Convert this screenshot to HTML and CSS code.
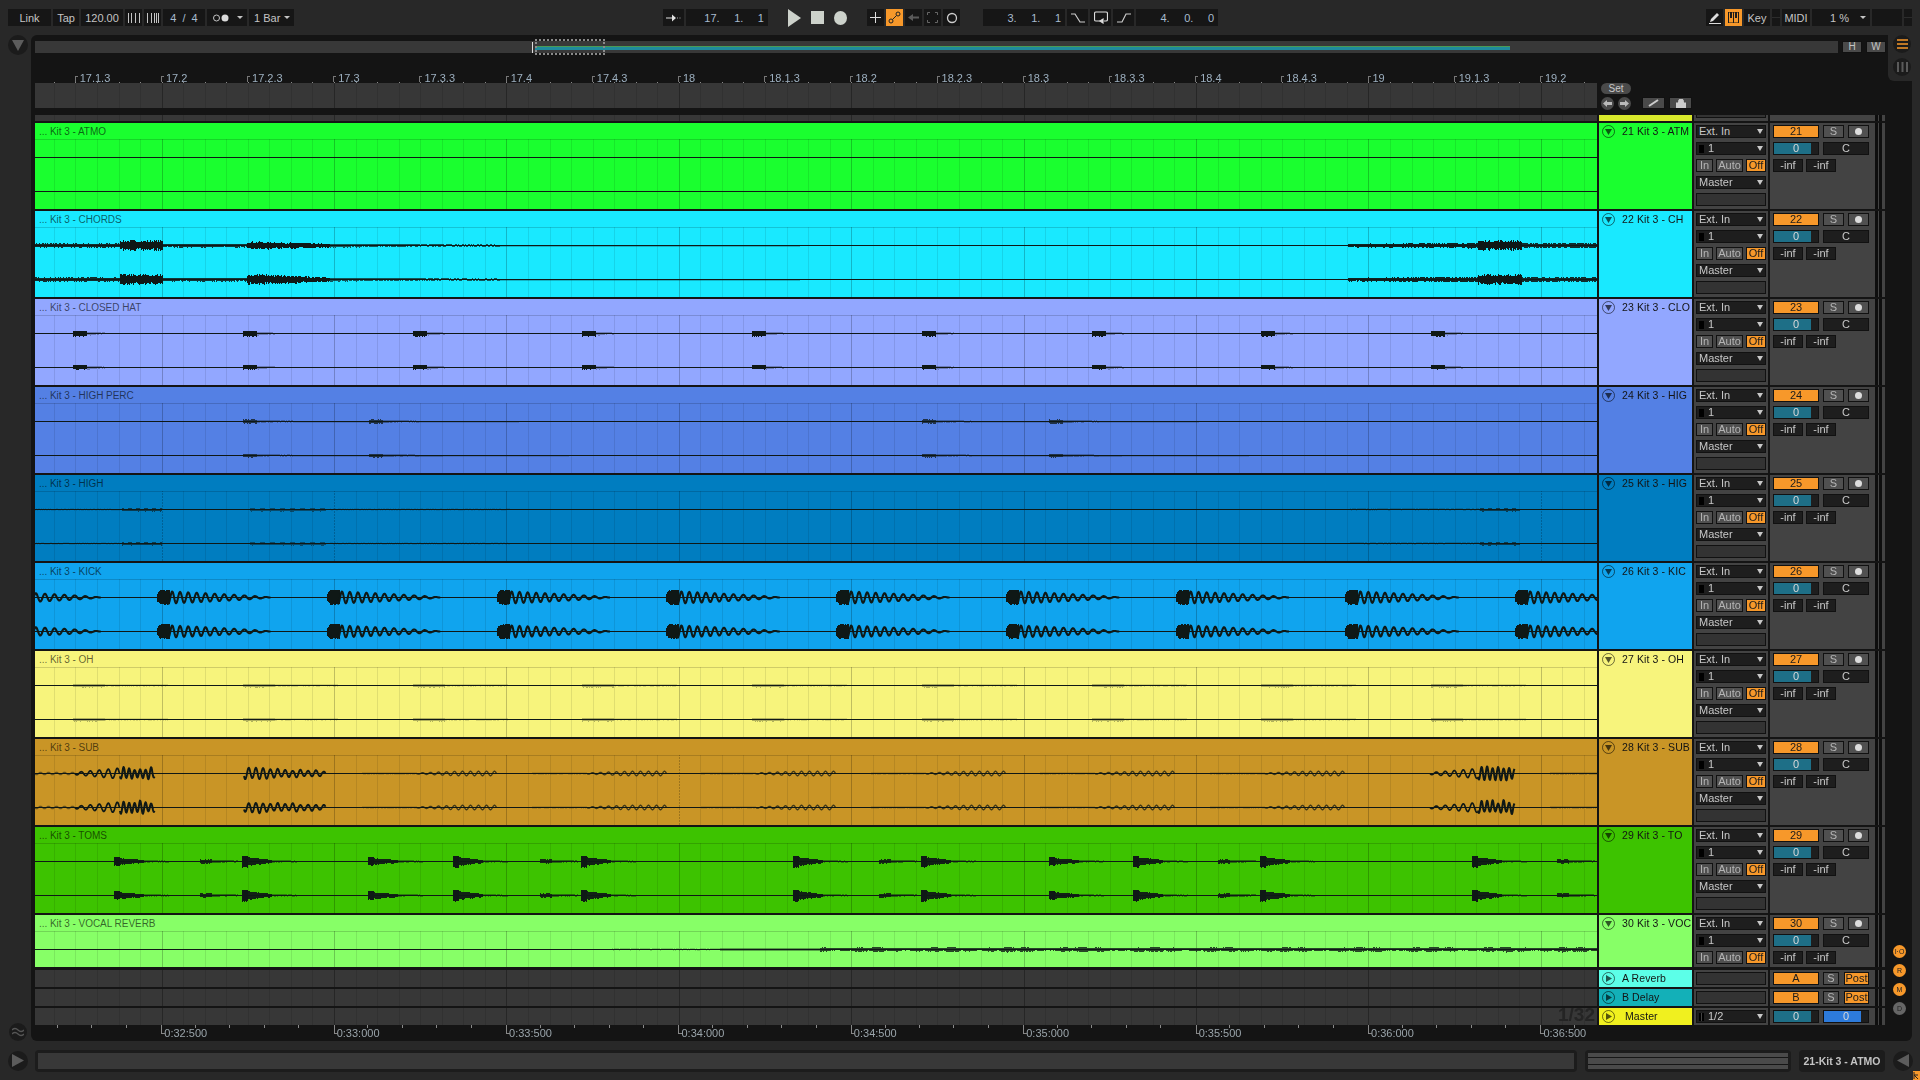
FILE: index.html
```html
<!DOCTYPE html>
<html lang="en">
<head>
    <meta charset="UTF-8">
    <title>Arrangement View</title>
    <link rel="stylesheet" href="styles.css">
</head>
<body>
    <div class="toolbar">
        <div class="tb w-43">Link</div>
        <div class="tb w-26">Tap</div>
        <div class="tb w-42">120.00</div>
        <div class="tb w-17"><svg width="13" height="12"><path d="M1.5 1v10M4.5 1v10M8.5 1v10M12.5 1v10" stroke="#c4c4c4"/></svg></div>
        <div class="tb w-17"><svg width="13" height="12"><path d="M1.5 1v10M5.5 1v10M8.5 1v10M10.5 1v10M12.5 1v10" stroke="#c4c4c4"/></svg></div>
        <div class="tb w-42 num-blue spaced">4 / 4</div>
        <div class="tb w-40 left-pad">
            <svg width="18" height="10"><circle cx="4.5" cy="5" r="3" fill="none" stroke="#c4c4c4"/><circle cx="13" cy="5" r="3.5" fill="#dcdcdc"/></svg>
            <span class="mini-arrow"></span>
        </div>
        <div class="tb w-45 left-pad">1 Bar<span class="mini-arrow"></span></div>

        <div class="tb w-21 gap-center">
            <svg width="16" height="10"><path d="M0 4.500h6V1.500l4 3.500-4 3.500V5.500H0z" fill="#e0e0e0"/><path d="M11 5h1M13.500 5h1" stroke="#aaa"/></svg>
        </div>
        <div class="tb w-82 counter">17. 1. 1</div>

        <svg class="transport first" width="13" height="18"><path d="M0 0l13 9-13 9z" fill="#cdd2cb"/></svg>
        <svg class="transport" width="13" height="13"><rect width="13" height="13" fill="#cdd2cb"/></svg>
        <svg class="transport" width="13" height="14"><ellipse cx="6.5" cy="7" rx="6.5" ry="7" fill="#cdd2cb"/></svg>

        <div class="tb w-17 gap-tools"><svg width="11" height="11"><path d="M5.5 0v11M0 5.5h11" stroke="#ddd"/></svg></div>
        <div class="tb w-17 orange"><svg width="13" height="13" fill="none" stroke="#222"><circle cx="3" cy="10" r="2"/><circle cx="10" cy="3" r="2"/><path d="M4.5 8.5l4-4"/></svg></div>
        <div class="tb w-17"><svg width="11" height="9"><path d="M0 4.500L5 1v2.500h6v2H5V8z" fill="#5a5a5a"/></svg></div>
        <div class="tb w-17"><svg width="11" height="11" fill="none" stroke="#666"><path d="M.5 3V.5H3M8 .5h2.500V3M10.500 8v2.500H8M3 10.500H.5V8"/></svg></div>
        <div class="tb w-17"><svg width="12" height="12"><circle cx="6" cy="6" r="4.500" fill="none" stroke="#ccc" stroke-width="1.300"/></svg></div>

        <div class="tb w-82 counter gap-loop">3. 1. 1</div>
        <div class="tb w-21"><svg width="14" height="10" fill="none" stroke="#ccc" stroke-width="1.200"><path d="M0 1h4l5 8h5"/></svg></div>
        <div class="tb w-21"><svg width="14" height="13" fill="none" stroke="#ddd" stroke-width="1.200"><path d="M6 10H2q-1.500 0-1.500-1.500v-6Q.5 1 2 1h10q1.500 0 1.500 1.500v6Q13.500 10 12 10h-2"/><path d="M9 8v4L6 10z" fill="#ddd"/></svg></div>
        <div class="tb w-21"><svg width="14" height="10" fill="none" stroke="#ccc" stroke-width="1.200"><path d="M0 9h5l4-8h5"/></svg></div>
        <div class="tb w-82 counter">4. 0. 0</div>

        <div class="tb w-17 gap-right"><svg width="12" height="12"><path d="M2 7l6-6 2 2-6 6-3 1z" fill="#ddd"/><path d="M0 11.500h12" stroke="#ddd"/></svg></div>
        <div class="tb w-17 orange"><svg width="11" height="11"><path d="M.5 0v11h10V0zM3 0v6M5.500 0v11M8 0v6" fill="none" stroke="#1c1c1c"/><path d="M2 0h2v6H2zM7 0h2v6H7z" fill="#1c1c1c"/></svg></div>
        <div class="tb w-26">Key</div>
        <div class="tb w-8 split"></div>
        <div class="tb w-28">MIDI</div>
        <div class="tb w-58 cpu">1 %<span class="mini-arrow"></span></div>
        <div class="tb w-30"></div>
        <div class="tb w-8 split"></div>
    </div>

    <div class="main">
        <div class="gutter">
            <div class="round"><svg width="12" height="11"><path d="M0 0h12L6 11z" fill="#5c5c5c"/></svg></div>
            <div class="round small"><svg width="12" height="10" fill="none" stroke="#555" stroke-width="1.300"><path d="M0 3q3-3 6 0t6 0M0 7q3-3 6 0t6 0"/></svg></div>
        </div>

        <div class="panel">
            <div class="notch">
                <div class="round small"><svg width="11" height="10"><path d="M0 1h11M0 5h11M0 9h11" stroke="#f7982a" stroke-width="1.500"/></svg></div>
                <div class="round small"><svg width="11" height="10"><path d="M1 0v10M5.500 0v10M10 0v10" stroke="#5a5a5a" stroke-width="2"/></svg></div>
            </div>

            <div class="overview">
                <div class="overview-bar">
                    <div class="ov-wave"></div>
                    <div class="ov-marker"></div>
                    <div class="ov-select"></div>
                </div>
                <div class="ov-btn">H</div>
                <div class="ov-btn">W</div>
            </div>

            <div class="top">
                <div class="top-left">
                    <div class="ruler" id="bar-ruler">
                        <canvas class="ruler-dots" id="bar-dots"></canvas>
                    </div>
                    <canvas class="grid band-a"></canvas>
                    <canvas class="grid band-b"></canvas>
                </div>
                <div class="top-right">
                    <div class="set-btn">Set</div>
                    <div class="set-tools">
                        <div class="loc"><svg width="9" height="9"><path d="M0 4.500L4 1v2h5v3H4v2z" fill="#bbb"/></svg></div>
                        <div class="loc"><svg width="9" height="9"><path d="M9 4.500L5 1v2H0v3h5v2z" fill="#bbb"/></svg></div>
                        <div class="tool-btn first"><svg width="11" height="8"><path d="M1 7l9-6" stroke="#ccc" stroke-width="2"/></svg></div>
                        <div class="tool-btn"><svg width="10" height="9"><path d="M0 4h10v5H0zM2.500 4V2.500a2.500 2.500 0 0 1 5 0V4" fill="#ccc" stroke="#ccc"/></svg></div>
                    </div>
                    <div class="prev-row">
                        <div class="prev-title"></div>
                        <div class="prev-io"><div class="prev-box"></div></div>
                        <div class="prev-mixer"><div class="meter"><span></span><span></span></div></div>
                    </div>
                </div>
            </div>

            <div class="body">
                <div class="rows" id="rows"></div>
                <div class="side">
                    <div class="dot-btn">I·O</div>
                    <div class="dot-btn">R</div>
                    <div class="dot-btn">M</div>
                    <div class="dot-btn off">D</div>
                </div>
            </div>

            <div class="time-ruler" id="time-ruler">
                <canvas class="time-ticks" id="time-ticks"></canvas>
            </div>
        </div>
    </div>

    <div class="statusbar">
        <div class="round status-play"><svg width="12" height="13"><path d="M0 0l12 6.500L0 13z" fill="#5c5c5c"/></svg></div>
        <div class="status-box long"><div class="status-inner"></div></div>
        <div class="status-box meter-box"><div class="status-lines"></div></div>
        <div class="status-name">21-Kit 3 - ATMO</div>
        <div class="round status-back"><svg width="12" height="13"><path d="M12 0L0 6.500 12 13z" fill="#5c5c5c"/></svg></div>
        <svg class="corner" width="7" height="9"><rect width="7" height="9" fill="#f7982a"/><path d="M1 1v7M1 4h4M1 4l4 4" stroke="#222"/></svg>
    </div>

    <script src="script.js"></script>
</body>
</html>
```

FILE: styles.css
```css
* {
    box-sizing: border-box;
    margin: 0;
    padding: 0;
}

body {
    width: 1920px;
    height: 1080px;
    overflow: hidden;
    background-color: #282828;
    color: #c4c4c4;
    font-family: "Liberation Sans", Arial, sans-serif;
    font-size: 11px;
}

canvas {
    display: block;
}

/* toolbar */

.toolbar {
    display: flex;
    align-items: center;
    gap: 2px;
    height: 35px;
    padding: 0 0 0 8px;
}

.tb {
    display: flex;
    align-items: center;
    justify-content: center;
    height: 17px;
    background-color: #161616;
    white-space: pre;
}

.w-8 { width: 8px; }
.w-17 { width: 17px; }
.w-21 { width: 21px; }
.w-26 { width: 26px; }
.w-28 { width: 28px; }
.w-30 { width: 30px; }
.w-40 { width: 40px; }
.w-42 { width: 42px; }
.w-43 { width: 43px; }
.w-45 { width: 45px; }
.w-58 { width: 58px; }
.w-82 { width: 82px; }

.orange {
    background-color: #f7982a;
}

.num-blue,
.counter {
    color: #a8bccf;
}

.spaced {
    word-spacing: 3px;
}

.left-pad {
    justify-content: flex-start;
    padding-left: 5px;
}

.mini-arrow {
    width: 0;
    height: 0;
    margin-left: auto;
    margin-right: 4px;
    border-left: 3px solid transparent;
    border-right: 3px solid transparent;
    border-top: 3px solid #c4c4c4;
}

.counter {
    justify-content: flex-end;
    padding-right: 4px;
    word-spacing: 11.5px;
}

.cpu {
    padding-left: 18px;
}

.split {
    background: linear-gradient(#161616 8px, #2c2c2c 8px, #2c2c2c 9px, #161616 9px);
}

.gap-center { margin-left: 367px; }
.gap-tools { margin-left: 18px; }
.gap-loop { margin-left: 21px; }
.gap-right { margin-left: 486px; }

.transport {
    margin-left: 8px;
}

.transport.first {
    margin-left: 18px;
}

/* main area */

.main {
    display: flex;
    height: 1006px;
}

.gutter {
    display: flex;
    flex-direction: column;
    justify-content: space-between;
    flex: 0 0 31px;
    padding-left: 8px;
}

.round {
    display: flex;
    align-items: center;
    justify-content: center;
    flex: none;
    width: 20px;
    height: 20px;
    border-radius: 50%;
    background-color: #1b1b1b;
}

.round.small {
    width: 18px;
    height: 18px;
}

.gutter .round.small {
    margin-left: 1px;
}

.panel {
    position: relative;
    width: 1881px;
    background-color: #141414;
    border-radius: 6px 0 6px 6px;
    padding-left: 4px;
}

.notch {
    position: absolute;
    top: 0;
    right: 0;
    display: flex;
    flex-direction: column;
    gap: 5px;
    width: 24px;
    height: 46px;
    padding-left: 5px;
    background-color: #282828;
    border-bottom-left-radius: 6px;
}

.overview {
    display: flex;
    gap: 4px;
    height: 18px;
    padding-top: 6px;
}

.overview-bar {
    position: relative;
    width: 1803px;
    height: 12px;
    background-color: #383838;
}

.ov-wave {
    position: absolute;
    top: 5px;
    left: 500px;
    width: 975px;
    height: 4px;
    background-color: #1f8a9c;
    border-top: 1px solid #4b9a55;
}

.ov-marker {
    position: absolute;
    top: 1px;
    left: 497px;
    width: 1px;
    height: 11px;
    background-color: #ddd;
}

.ov-select {
    position: absolute;
    top: -2px;
    left: 500px;
    width: 70px;
    height: 16px;
    border: 2px dotted #8a8a8a;
}

.ov-btn {
    width: 20px;
    height: 12px;
    background-color: #4a4a4a;
    border: 1px solid #111;
    color: #c4c4c4;
    font-size: 10px;
    line-height: 10px;
    text-align: center;
}

.top {
    display: flex;
    gap: 2px;
    height: 70px;
}

.top-left {
    width: 1562px;
}

.ruler {
    position: relative;
    display: flex;
    height: 30px;
    padding-left: 39.7px;
    color: #9db0c0;
}

.bar-mark {
    position: relative;
    flex: 0 0 86.2px;
    padding: 19px 0 0 5px;
    line-height: 12px;
}

.bar-mark::before {
    content: "";
    position: absolute;
    left: 0;
    bottom: 1px;
    width: 2px;
    height: 5px;
    border-left: 1px solid #777;
    border-top: 1px solid #777;
}

.ruler-dots {
    position: absolute;
    left: 0;
    bottom: 0;
    width: 1562px;
    height: 1px;
}

.band-a {
    width: 1562px;
    height: 25px;
}

.band-b {
    width: 1562px;
    height: 6px;
    margin-top: 7px;
}

.top-right {
    width: 286px;
    padding-top: 30px;
}

.set-btn {
    width: 30px;
    height: 11px;
    margin-left: 2px;
    border-radius: 6px;
    background-color: #4a4a4a;
    color: #c8c8c8;
    font-size: 10px;
    line-height: 11px;
    text-align: center;
}

.set-tools {
    display: flex;
    gap: 4px;
    height: 13px;
    margin: 3px 0 5px 2px;
}

.loc {
    display: flex;
    align-items: center;
    justify-content: center;
    width: 13px;
    height: 13px;
    border-radius: 50%;
    background-color: #4a4a4a;
}

.tool-btn {
    display: flex;
    align-items: center;
    justify-content: center;
    width: 23px;
    height: 12px;
    background-color: #4a4a4a;
    border: 1px solid #111;
}

.tool-btn.first {
    margin-left: 7px;
}

.prev-row {
    display: flex;
    gap: 2px;
    height: 6px;
}

.prev-title {
    width: 93px;
    background-color: #d9e92c;
}

.prev-io {
    width: 74px;
    padding: 0 2px;
    background-color: #434343;
}

.prev-box {
    height: 3px;
    background-color: #333;
    border: 1px solid #111;
    border-top: 0;
}

.prev-mixer {
    display: flex;
    width: 115px;
    padding-left: 105px;
    background-color: #434343;
}

/* track rows */

.body {
    display: flex;
    height: 902px;
}

.rows {
    display: flex;
    flex-direction: column;
    gap: 2px;
    width: 1850px;
}

.track {
    display: flex;
    gap: 2px;
    flex: 0 0 86px;
}

.track.short {
    flex-basis: 52px;
    margin-bottom: 1px;
}

.track.ret {
    flex-basis: 17px;
}

.clip {
    width: 1562px;
    background-color: var(--c);
}

.clip-name {
    height: 16px;
    padding-left: 4px;
    color: rgba(0, 0, 0, 0.62);
    font-size: 10px;
    letter-spacing: -0.04px;
    line-height: 18px;
    white-space: pre;
}

.wave {
    width: 1562px;
    height: 70px;
}

.short .wave {
    height: 36px;
}

.grid {
    display: block;
    background-color: #373737;
}

.ret .grid {
    width: 1562px;
    height: 17px;
}

.clip-wrap {
    position: relative;
}

.title {
    display: flex;
    align-items: flex-start;
    gap: 7px;
    width: 93px;
    padding: 2px 0 0 3px;
    overflow: hidden;
    background-color: var(--c);
    color: #141414;
    font-size: 10.5px;
    letter-spacing: 0.1px;
    line-height: 13px;
    white-space: pre;
}

.arm {
    display: flex;
    align-items: center;
    justify-content: center;
    flex: none;
    width: 13px;
    height: 13px;
    border: 1px solid rgba(0, 0, 0, 0.55);
    border-radius: 50%;
}

.io {
    display: flex;
    flex-direction: column;
    gap: 4px;
    width: 74px;
    padding: 2px 2px 0;
    background-color: #434343;
}

.mixer {
    display: flex;
    width: 115px;
    padding-left: 3px;
    background-color: #434343;
}

.strip {
    display: flex;
    flex-direction: column;
    gap: 4px;
    width: 96px;
    padding-top: 2px;
}

.strip-row {
    display: flex;
    gap: 4px;
}

.meter {
    display: flex;
    gap: 1px;
    flex: none;
    width: 7px;
    margin-left: 6px;
}

.prev-mixer .meter {
    margin-left: 0;
}

.meter span {
    flex: 1;
    background-color: #0e0e0e;
}

.ctl {
    position: relative;
    display: flex;
    align-items: center;
    flex: none;
    height: 13px;
    padding-left: 2px;
    background-color: #1e1e1e;
    border: 1px solid #111;
    color: #c8c8c8;
    line-height: 11px;
}

.ctl.center {
    justify-content: center;
    padding-left: 0;
}

.drop::after {
    content: "";
    position: absolute;
    right: 2px;
    top: 3px;
    border-left: 3.5px solid transparent;
    border-right: 3.5px solid transparent;
    border-top: 5px solid #c8c8c8;
}

.chan-bar {
    width: 5px;
    height: 8px;
    margin-right: 4px;
    background-color: #000;
}

.chan-bar.stereo {
    background: repeating-linear-gradient(to right, #000 0, #000 2px, #444 2px, #444 3px);
}

.box {
    background-color: #333;
}

.grey {
    background-color: #505050;
    color: #b4b4b4;
}

.hot {
    background-color: #f7982a;
    color: #1c1c1c;
}

.w-in { width: 17px; margin-right: 3px; }
.w-auto { width: 27px; margin-right: 3px; }
.w-off { width: 20px; }
.w-46 { width: 46px; }
.w-s { width: 21px; }
.w-s-ret { width: 16px; margin-right: 1px; }
.w-post { width: 25px; }
.w-inf { width: 30px; margin-right: -1px; }
.wide { width: 70px; }

.io-row {
    display: flex;
}

.rec-dot {
    width: 7px;
    height: 7px;
    border-radius: 50%;
    background-color: #ddd;
}

.slider {
    background: linear-gradient(to right, #1e6f87 83%, #1e1e1e 83%);
    color: #d8d8d8;
}

.slider.blue {
    background: linear-gradient(to right, #2d7bdc 83%, #1e1e1e 83%);
}

.side {
    display: flex;
    flex-direction: column;
    justify-content: flex-end;
    gap: 6px;
    padding: 0 0 10px 8px;
}

.dot-btn {
    width: 13px;
    height: 13px;
    border-radius: 50%;
    background-color: #f7982a;
    color: #222;
    font-size: 7px;
    line-height: 13px;
    text-align: center;
}

.dot-btn.off {
    background-color: #666;
}

/* bottom ruler */

.time-ruler {
    position: relative;
    display: flex;
    width: 1562px;
    height: 16px;
    padding-left: 126.3px;
    color: #9aa4aa;
}

.time-mark {
    position: relative;
    flex: 0 0 172.4px;
    padding: 2px 0 0 3px;
    line-height: 12px;
}

.time-mark::before {
    content: "";
    position: absolute;
    left: 0;
    top: 0;
    width: 3px;
    height: 8px;
    border-left: 1px solid #888;
    border-bottom: 1px solid #888;
}

.time-ticks {
    position: absolute;
    left: 0;
    top: 0;
    width: 1562px;
    height: 3px;
}

.snap {
    position: absolute;
    right: 2px;
    top: -2px;
    color: #242424;
    font-size: 19px;
    font-weight: bold;
    line-height: 18px;
}

/* status bar */

.statusbar {
    position: relative;
    display: flex;
    align-items: center;
    height: 39px;
    padding: 0 0 0 8px;
}

.status-play {
    margin-right: 7px;
}

.status-box {
    height: 22px;
    padding: 3px;
    background-color: #1c1c1c;
    border-radius: 4px;
}

.long {
    width: 1542px;
    margin-right: 8px;
}

.meter-box {
    width: 206px;
    margin-right: 8px;
}

.status-inner {
    height: 16px;
    background-color: #383838;
}

.status-lines {
    height: 16px;
    background: linear-gradient(#4a4a4a 0, #4a4a4a 4px, #161616 4px, #161616 5px, #4a4a4a 5px, #4a4a4a 11px, #161616 11px, #161616 12px, #4a4a4a 12px);
}

.status-name {
    width: 86px;
    height: 22px;
    margin-right: 8px;
    background-color: #1c1c1c;
    border-radius: 4px;
    color: #c4c4c4;
    font-weight: bold;
    font-size: 10.5px;
    line-height: 22px;
    text-align: center;
    white-space: pre;
}

.corner {
    position: absolute;
    right: 0;
    bottom: 0;
}

.atmo { --c: #1aff2f; }
.chords { --c: #19e9ff; }
.hat { --c: #92a7ff; }
.perc { --c: #5480e4; }
.high { --c: #007dc0; }
.kick { --c: #10a4ee; }
.oh { --c: #f7f47c; }
.sub { --c: #c99526; }
.toms { --c: #3dc300; }
.vocal { --c: #87ff67; }
.reverb { --c: #5cffe8; }
.delay { --c: #13b0b8; }
.master { --c: #f0f01f; }
```

FILE: script.js
```js
const tracks = [
    { cls: 'atmo', num: 21, clip: 'ATMO', title: 'ATM' },
    { cls: 'chords', num: 22, clip: 'CHORDS', title: 'CH', dashes: [1369] },
    { cls: 'hat', num: 23, clip: 'CLOSED HAT', title: 'CLO' },
    { cls: 'perc', num: 24, clip: 'HIGH PERC', title: 'HIG', dashes: [1369] },
    { cls: 'high', num: 25, clip: 'HIGH', title: 'HIG', dashes: [162, 334, 507, 852, 1197, 1541] },
    { cls: 'kick', num: 26, clip: 'KICK', title: 'KIC' },
    { cls: 'oh', num: 27, clip: 'OH', title: 'OH' },
    { cls: 'sub', num: 28, clip: 'SUB', title: 'SUB', dashes: [679, 1369] },
    { cls: 'toms', num: 29, clip: 'TOMS', title: 'TO' },
    { cls: 'vocal', num: 30, clip: 'VOCAL REVERB', title: 'VOC', dashes: [1369], short: true }
];

const downArm = '<span class="arm"><svg width="7" height="6"><path d="M0 0h7L3.500 6z" fill="rgba(0,0,0,.65)"/></svg></span>';
const rightArm = '<span class="arm"><svg width="6" height="7"><path d="M0 0l6 3.500L0 7z" fill="rgba(0,0,0,.65)"/></svg></span>';
const meter = '<div class="meter"><span></span><span></span></div>';

function trackHtml(t) {
    const lower = t.short ? '' : `
        <div class="ctl drop wide">Master</div>
        <div class="ctl box wide"></div>`;
    return `
    <div class="track ${t.cls} ${t.short ? 'short' : ''}">
        <div class="clip">
            <div class="clip-name">... Kit 3 - ${t.clip}</div>
            <canvas class="wave" data-kind="${t.cls}" data-dashes="${(t.dashes || []).join(',')}"></canvas>
        </div>
        <div class="title">${downArm}<span>${t.num} Kit 3 - ${t.title}</span></div>
        <div class="io">
            <div class="ctl drop wide">Ext. In</div>
            <div class="ctl drop wide"><span class="chan-bar"></span>1</div>
            <div class="io-row">
                <div class="ctl center grey w-in">In</div>
                <div class="ctl center grey w-auto">Auto</div>
                <div class="ctl center hot w-off">Off</div>
            </div>${lower}
        </div>
        <div class="mixer">
            <div class="strip">
                <div class="strip-row">
                    <div class="ctl center hot w-46">${t.num}</div>
                    <div class="ctl center grey w-s">S</div>
                    <div class="ctl center grey w-s"><span class="rec-dot"></span></div>
                </div>
                <div class="strip-row">
                    <div class="ctl center slider w-46">0</div>
                    <div class="ctl center w-46">C</div>
                </div>
                <div class="strip-row">
                    <div class="ctl center w-inf">-inf</div>
                    <div class="ctl center w-inf">-inf</div>
                </div>
            </div>
            ${meter}
        </div>
    </div>`;
}

function returnHtml(cls, name, letter) {
    return `
    <div class="track ret ${cls}">
        <canvas class="grid"></canvas>
        <div class="title">${rightArm}<span>${name}</span></div>
        <div class="io"><div class="ctl box wide"></div></div>
        <div class="mixer">
            <div class="strip">
                <div class="strip-row">
                    <div class="ctl center hot w-46">${letter}</div>
                    <div class="ctl center grey w-s-ret">S</div>
                    <div class="ctl center hot w-post">Post</div>
                </div>
            </div>
            ${meter}
        </div>
    </div>`;
}

const masterHtml = `
    <div class="track ret master">
        <div class="clip-wrap"><canvas class="grid"></canvas><div class="snap">1/32</div></div>
        <div class="title">${rightArm}<span> Master</span></div>
        <div class="io"><div class="ctl drop wide"><span class="chan-bar stereo"></span>1/2</div></div>
        <div class="mixer">
            <div class="strip">
                <div class="strip-row">
                    <div class="ctl center slider w-46">0</div>
                    <div class="ctl center slider blue w-46">0</div>
                </div>
            </div>
            ${meter}
        </div>
    </div>`;

document.getElementById('rows').innerHTML = tracks.map(trackHtml).join('')
    + returnHtml('reverb', 'A Reverb', 'A')
    + returnHtml('delay', 'B Delay', 'B')
    + masterHtml;

// rulers
const barLabels = ['17.1.3', '17.2', '17.2.3', '17.3', '17.3.3', '17.4', '17.4.3', '18', '18.1.3', '18.2',
    '18.2.3', '18.3', '18.3.3', '18.4', '18.4.3', '19', '19.1.3', '19.2'];
const timeLabels = ['0:32:500', '0:33:000', '0:33:500', '0:34:000', '0:34:500', '0:35:000', '0:35:500', '0:36:000', '0:36:500'];

document.getElementById('bar-ruler').insertAdjacentHTML('beforeend',
    barLabels.map(l => `<div class="bar-mark">${l}</div>`).join(''));
document.getElementById('time-ruler').insertAdjacentHTML('beforeend',
    timeLabels.map(l => `<div class="time-mark">${l}</div>`).join(''));

const LEFT = 35;

function setup(c) {
    c.width = c.clientWidth;
    c.height = c.clientHeight;
    const ctx = c.getContext('2d');
    ctx.translate(-LEFT, 0);
    return ctx;
}

function drawGrid(ctx, h, soft, hard) {
    for (let i = 0; i < 80; i++) {
        const x = Math.round(32.3 + 21.55 * i);
        ctx.fillStyle = (i - 6) % 8 === 0 ? hard : soft;
        ctx.fillRect(x, 0, 1, h);
    }
}

document.querySelectorAll('canvas.grid').forEach(c => {
    drawGrid(setup(c), c.height, 'rgba(0,0,0,0.1)', 'rgba(0,0,0,0.3)');
});

const dots = setup(document.getElementById('bar-dots'));
dots.fillStyle = '#8a8a8a';
for (let i = 0; i < 72; i++) {
    dots.fillRect(Math.round(53.85 + 21.55 * i), 0, 1, 1);
}

const ticks = setup(document.getElementById('time-ticks'));
ticks.fillStyle = '#8a8a8a';
for (let i = 0; i < 46; i++) {
    if (i % 5 !== 3) ticks.fillRect(Math.round(57 + 34.48 * i), 0, 1, 3);
}

// waveforms
let seed = 7;
function rnd() {
    seed = (seed * 16807) % 2147483647;
    return seed / 2147483647;
}

const INK = '#0f1816';

function band(ctx, cy, x0, x1, amp, alpha, jitter = 0.35) {
    ctx.fillStyle = INK;
    ctx.globalAlpha = alpha;
    for (let x = Math.max(x0, LEFT); x < x1; x++) {
        const t = (x - x0) / (x1 - x0);
        const a = amp(t, x) * (1 - jitter + rnd() * jitter);
        ctx.fillRect(x, Math.round(cy - a), 1, Math.round(a * 2) + 1);
    }
    ctx.globalAlpha = 1;
}

function sine(ctx, cy, x0, x1, amp, period, width, alpha = 1, jitter = 0) {
    ctx.strokeStyle = INK;
    ctx.lineWidth = width;
    ctx.lineJoin = 'round';
    ctx.globalAlpha = alpha;
    ctx.beginPath();
    let phase = 0;
    let wobble = 1;
    for (let x = x0; x < x1; x += 0.5) {
        const t = (x - x0) / (x1 - x0);
        const before = Math.sin(phase);
        phase += Math.PI / period(t);
        if (before * Math.sin(phase) <= 0) wobble = 1 - jitter * rnd();
        const y = cy + 0.5 + amp(t) * wobble * Math.sin(phase);
        if (x === x0) ctx.moveTo(x, y); else ctx.lineTo(x, y);
    }
    ctx.stroke();
    ctx.globalAlpha = 1;
}

const flat = v => () => v;
const fade = (a, b) => t => a + (b - a) * t;

const draw = {
    atmo() {},

    chords(ctx, cy, lane) {
        band(ctx, cy, 35, 120, flat(1.8), 0.9, 0.5);
        band(ctx, cy, 120, 163, flat(5), 1, 0.5);
        band(ctx, cy, 163, 247, flat(1.4), 0.85, 0.5);
        band(ctx, cy, 247, 330, t => (lane ? 5.5 : 4) * (1 - t * 0.65), 1, 0.5);
        band(ctx, cy, 330, 500, fade(1.5, 0.5), 0.7, 0.5);
        band(ctx, cy, 500, 800, flat(0.5), 0.25);
        band(ctx, cy, 1348, 1478, fade(1.4, 2.4), 0.95, 0.5);
        band(ctx, cy, 1478, 1522, flat(5), 1, 0.5);
        band(ctx, cy, 1522, 1597, flat(2.2), 0.9, 0.5);
    },

    hat(ctx, cy, lane) {
        for (let x = 73; x < 1500; x += 169.75) {
            const a = lane ? 1.8 : 2.4;
            band(ctx, cy, Math.round(x), Math.round(x) + 14, flat(a), 1, 0.15);
            band(ctx, cy, Math.round(x) + 14, Math.round(x) + 32, fade(1.5, 0.5), 0.3);
        }
    },

    perc(ctx, cy, lane) {
        [243, 369, 922, 1049].forEach(x => {
            band(ctx, cy, x, x + 14, flat(lane ? 1.3 : 1.6), 0.75, 0.15);
            band(ctx, cy, x + 14, x + 50, fade(1.2, 0.5), 0.3);
            band(ctx, cy, x + 50, x + 150 + lane * 50, flat(0.5), 0.16);
        });
    },

    high(ctx, cy) {
        band(ctx, cy, 35, 120, flat(0.6), 0.12);
        band(ctx, cy, 122, 162, (t, x) => (x % 8 < 4 ? 1.4 : 0.5), 0.65);
        band(ctx, cy, 250, 326, (t, x) => (x % 10 < 5 ? 1.4 : 0.5), 0.5);
        band(ctx, cy, 330, 510, flat(0.6), 0.12);
        band(ctx, cy, 1350, 1480, flat(0.7), 0.2);
        band(ctx, cy, 1480, 1520, (t, x) => (x % 8 < 4 ? 1.4 : 0.5), 0.65);
    },

    kick(ctx, cy) {
        for (let k = -1; k < 9; k++) {
            const x = 157 + 169.75 * k;
            band(ctx, cy, Math.round(x), Math.round(x) + 13, t => 7 * Math.sqrt(Math.min(1, t * 3 + 0.25)), 1, 0.08);
            sine(ctx, cy, x + 10, x + 114, t => 6.2 * Math.pow(1 - t, 0.8), t => 7.5 + t * 4, 2.1);
        }
    },

    oh(ctx, cy) {
        for (let x = 73; x < 1500; x += 169.75) {
            band(ctx, cy, Math.round(x), Math.round(x) + 32, flat(1.4), 0.3);
            band(ctx, cy, Math.round(x) + 32, Math.round(x) + 95, flat(0.9), 0.14);
        }
    },

    sub(ctx, cy) {
        sine(ctx, cy, 35, 75, flat(1.2), flat(8), 1.2, 0.55);
        sine(ctx, cy, 75, 120, fade(1.2, 5.5), flat(9), 1.7);
        sine(ctx, cy, 120, 155, flat(7), flat(5.5), 2, 1, 0.5);
        sine(ctx, cy, 244, 326, fade(6.5, 3), t => 7 + t, 1.9, 1, 0.4);
        [497, 667, 836, 1006, 1175, 1345].forEach(end => {
            band(ctx, cy, end - 135, end - 80, flat(1), 0.14);
            sine(ctx, cy, end - 80, end, t => 0.6 + 1.7 * Math.min(1, t * 2), flat(8), 1.3, 0.75);
        });
        sine(ctx, cy, 1430, 1478, fade(1, 5), flat(9), 1.6);
        sine(ctx, cy, 1478, 1515, flat(7.5), flat(5.5), 2, 1, 0.5);
        band(ctx, cy, 1550, 1597, flat(1), 0.18);
    },

    toms(ctx, cy) {
        [[114, 4], [242, 5.500], [368, 4], [453, 5.500], [581, 5.500], [793, 5.500],
            [921, 5.500], [1049, 4], [1133, 5.500], [1260, 5.500], [1472, 5.500]].forEach(([x, a]) => {
            band(ctx, cy, x, x + 6, flat(a), 1, 0.1);
            band(ctx, cy, x + 6, x + 30, fade(a * 0.7, 1), 0.95, 0.15);
            band(ctx, cy, x + 30, x + 55, fade(1, 0.5), 0.4);
        });
        [200, 540, 879, 1218, 1557].forEach(x => {
            band(ctx, cy, x, x + 12, flat(1.6), 0.9, 0.1);
            band(ctx, cy, x + 12, x + 38, fade(1.2, 0.6), 0.5);
        });
    },

    vocal(ctx, cy) {
        band(ctx, cy, 612, 720, flat(0.7), 0.2);
        band(ctx, cy, 720, 820, flat(1.2), 0.4);
        band(ctx, cy, 820, 1597, (t, x) => 0.8 + Math.abs(Math.sin(x * 0.045) * Math.sin(x * 0.17)) * 1.6, 0.8);
    }
};

document.querySelectorAll('canvas.wave').forEach(c => {
    const ctx = setup(c);
    const color = getComputedStyle(c).getPropertyValue('--c');
    ctx.fillStyle = 'rgba(0,0,0,0.16)';
    ctx.fillRect(LEFT, 0, c.width, 1);
    drawGrid(ctx, c.height, 'rgba(0,0,0,0.09)', 'rgba(0,0,0,0.22)');

    (c.dataset.dashes ? c.dataset.dashes.split(',') : []).forEach(x => {
        ctx.fillStyle = color;
        for (let y = 1; y < c.height; y += 3) ctx.fillRect(+x, y, 1, 1);
    });

    const lanes = c.height > 40 ? [18, 52] : [18];
    lanes.forEach((cy, lane) => {
        ctx.fillStyle = INK;
        ctx.fillRect(LEFT, cy, c.width, 1);
        draw[c.dataset.kind](ctx, cy, lane);
    });
});
```
